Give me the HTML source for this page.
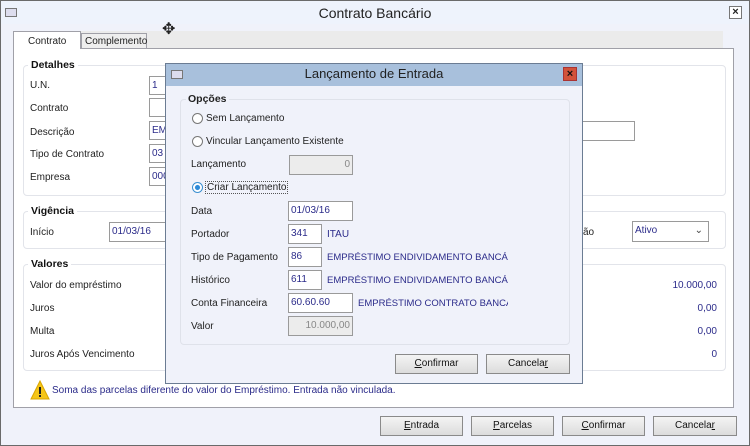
<!DOCTYPE html>
<html><head><meta charset="utf-8"><style>
*{box-sizing:border-box;margin:0;padding:0}
body{width:750px;height:446px;overflow:hidden;font-family:"Liberation Sans",sans-serif;font-size:10px;color:#222;position:relative;background:#f0f2fa}
.a{position:absolute}
.win{left:0;top:0;width:750px;height:446px;border:1px solid #6a6a6a;background:#f0f2fa}
.title{left:1px;top:1px;width:748px;height:23px;background:#eef3fc}
.inp{position:absolute;background:#fff;border:1px solid #9a9a9a;color:#2b2b8a;font-size:10px;padding:3px 2px;white-space:nowrap;overflow:hidden}
.dis{background:#ececec;color:#888;text-align:right}
.grp{position:absolute;border:1px solid #e2e4ea;border-radius:4px}
.gt{position:absolute;font-weight:bold;font-size:10.5px;color:#111;background:#fff;padding:0 3px}
.lbl{position:absolute;font-size:10px;color:#222}
.btn{position:absolute;height:20px;border:1px solid #8a8a8a;background:linear-gradient(#f4f4f4,#dcdcdc);text-align:center;font-size:10px;line-height:18px;color:#111}
.blue{color:#2b2b8a}
.rad{position:absolute;width:11px;height:11px;border:1px solid #777;border-radius:50%;background:#fff}
</style></head><body>
<div class="a win"></div>
<div class="a title"></div>
<div class="a" style="left:5px;top:8px;width:12px;height:9px;border:1px solid #777;background:#dde"></div>
<div class="a" style="left:0;width:750px;top:5px;text-align:center;font-size:14px;color:#222">Contrato Bancário</div>
<div class="a" style="left:729px;top:6px;width:13px;height:13px;border:1px solid #777;background:#fff;font-size:11px;font-weight:bold;line-height:11px;text-align:center">×</div>
<div class="a" style="left:13px;top:31px;width:710px;height:17px;background:#ebebeb"></div>
<!-- content panel -->
<div class="a" style="left:13px;top:48px;width:721px;height:360px;background:#fff;border:1px solid #a0a0a8"></div>
<div class="a" style="left:13px;top:31px;width:68px;height:18px;background:#fff;border:1px solid #a0a0a8;border-bottom:none;font-size:10px;padding:4px 0 0 14px">Contrato</div>
<div class="a" style="left:81px;top:33px;width:66px;height:16px;background:#eee;border:1px solid #a0a0a8;font-size:10px;padding:2px 0 0 3px">Complemento</div>
<div class="a" style="left:162px;top:19px;font-size:16px">✥</div>

<div class="grp" style="left:23px;top:65px;width:703px;height:131px"></div>
<div class="gt" style="left:28px;top:59px">Detalhes</div>
<div class="lbl" style="left:30px;top:80px">U.N.</div>
<div class="lbl" style="left:30px;top:103px">Contrato</div>
<div class="lbl" style="left:30px;top:127px">Descrição</div>
<div class="lbl" style="left:30px;top:149px">Tipo de Contrato</div>
<div class="lbl" style="left:30px;top:172px">Empresa</div>
<div class="inp" style="left:149px;top:76px;width:30px;height:19px">1</div>
<div class="inp" style="left:149px;top:98px;width:30px;height:19px"></div>
<div class="inp" style="left:149px;top:121px;width:30px;height:19px">EMP</div>
<div class="inp" style="left:149px;top:144px;width:30px;height:19px">03</div>
<div class="inp" style="left:149px;top:167px;width:30px;height:19px">000</div>
<div class="inp" style="left:570px;top:121px;width:65px;height:20px"></div>

<div class="grp" style="left:23px;top:211px;width:703px;height:38px"></div>
<div class="gt" style="left:28px;top:205px">Vigência</div>
<div class="lbl" style="left:30px;top:227px">Início</div>
<div class="inp" style="left:109px;top:222px;width:70px;height:20px">01/03/16</div>
<div class="lbl" style="left:583px;top:227px">ão</div>
<div class="inp" style="left:632px;top:221px;width:77px;height:21px">Ativo<span style="position:absolute;right:5px;color:#444">⌄</span></div>

<div class="grp" style="left:23px;top:264px;width:703px;height:107px"></div>
<div class="gt" style="left:28px;top:258px">Valores</div>
<div class="lbl" style="left:30px;top:280px">Valor do empréstimo</div>
<div class="lbl" style="left:30px;top:303px">Juros</div>
<div class="lbl" style="left:30px;top:326px">Multa</div>
<div class="lbl" style="left:30px;top:349px">Juros Após Vencimento</div>
<div class="lbl blue" style="right:33px;top:280px">10.000,00</div>
<div class="lbl blue" style="right:33px;top:303px">0,00</div>
<div class="lbl blue" style="right:33px;top:326px">0,00</div>
<div class="lbl blue" style="right:33px;top:349px">0</div>
<svg class="a" style="left:30px;top:380px" width="20" height="20"><path d="M10 1 L19 19 L1 19 Z" fill="#f5c518" stroke="#d9a400"/><rect x="9" y="7" width="2" height="7" fill="#222"/><rect x="9" y="15" width="2" height="2" fill="#222"/></svg>
<div class="lbl blue" style="left:52px;top:385px">Soma das parcelas diferente do valor do Empréstimo. Entrada não vinculada.</div>

<div class="btn" style="left:380px;top:416px;width:83px"><u>E</u>ntrada</div>
<div class="btn" style="left:471px;top:416px;width:83px"><u>P</u>arcelas</div>
<div class="btn" style="left:562px;top:416px;width:83px"><u>C</u>onfirmar</div>
<div class="btn" style="left:653px;top:416px;width:84px">Cancela<u>r</u></div>

<!-- dialog -->
<div class="a" style="left:165px;top:63px;width:418px;height:321px;border:1px solid #6b7c93;background:#f0f2fa"></div>
<div class="a" style="left:166px;top:64px;width:416px;height:22px;background:#a8c0dc"></div>
<div class="a" style="left:171px;top:70px;width:12px;height:9px;border:1px solid #777;background:#dde"></div>
<div class="a" style="left:166px;top:66px;width:416px;text-align:center;font-size:13px;color:#222">Lançamento de Entrada</div>
<div class="a" style="left:563px;top:67px;width:14px;height:14px;background:#d2533a;border:1px solid #a33;color:#111;font-weight:bold;font-size:11px;line-height:12px;text-align:center">×</div>
<div class="a" style="left:180px;top:99px;width:390px;height:246px;border:1px solid #dfe2ea;border-radius:4px"></div>
<div class="a" style="left:186px;top:93px;font-weight:bold;font-size:10.5px;background:#f0f2fa;padding:0 2px">Opções</div>
<div class="rad" style="left:192px;top:113px"></div><div class="lbl" style="left:206px;top:113px">Sem Lançamento</div>
<div class="rad" style="left:192px;top:136px"></div><div class="lbl" style="left:206px;top:136px">Vincular Lançamento Existente</div>
<div class="lbl" style="left:191px;top:159px">Lançamento</div>
<div class="inp dis" style="left:289px;top:155px;width:64px;height:20px">0</div>
<div class="rad" style="left:192px;top:182px;border-color:#3a8fd0;background:radial-gradient(#2c8ad8 35%,#fff 45%)"></div><div class="lbl" style="left:205px;top:181px;border:1px dotted #555;padding:0 1px">Criar Lançamento</div>
<div class="lbl" style="left:191px;top:206px">Data</div>
<div class="inp" style="left:288px;top:201px;width:65px;height:20px">01/03/16</div>
<div class="lbl" style="left:191px;top:229px">Portador</div>
<div class="inp" style="left:288px;top:224px;width:34px;height:20px">341</div>
<div class="lbl blue" style="left:327px;top:229px">ITAU</div>
<div class="lbl" style="left:191px;top:252px">Tipo de Pagamento</div>
<div class="inp" style="left:288px;top:247px;width:34px;height:20px">86</div>
<div class="lbl blue" style="left:327px;top:252px;width:181px;overflow:hidden;white-space:nowrap;font-size:9.5px">EMPRÉSTIMO ENDIVIDAMENTO BANCÁRIO</div>
<div class="lbl" style="left:191px;top:275px">Histórico</div>
<div class="inp" style="left:288px;top:270px;width:34px;height:20px">611</div>
<div class="lbl blue" style="left:327px;top:275px;width:181px;overflow:hidden;white-space:nowrap;font-size:9.5px">EMPRÉSTIMO ENDIVIDAMENTO BANCÁRIO</div>
<div class="lbl" style="left:191px;top:298px">Conta Financeira</div>
<div class="inp" style="left:288px;top:293px;width:65px;height:20px">60.60.60</div>
<div class="lbl blue" style="left:358px;top:298px;width:150px;overflow:hidden;white-space:nowrap;font-size:9.5px">EMPRÉSTIMO CONTRATO BANCÁRIO</div>
<div class="lbl" style="left:191px;top:321px">Valor</div>
<div class="inp dis" style="left:288px;top:316px;width:65px;height:20px">10.000,00</div>
<div class="btn" style="left:395px;top:354px;width:83px"><u>C</u>onfirmar</div>
<div class="btn" style="left:486px;top:354px;width:84px">Cancela<u>r</u></div>
</body></html>
